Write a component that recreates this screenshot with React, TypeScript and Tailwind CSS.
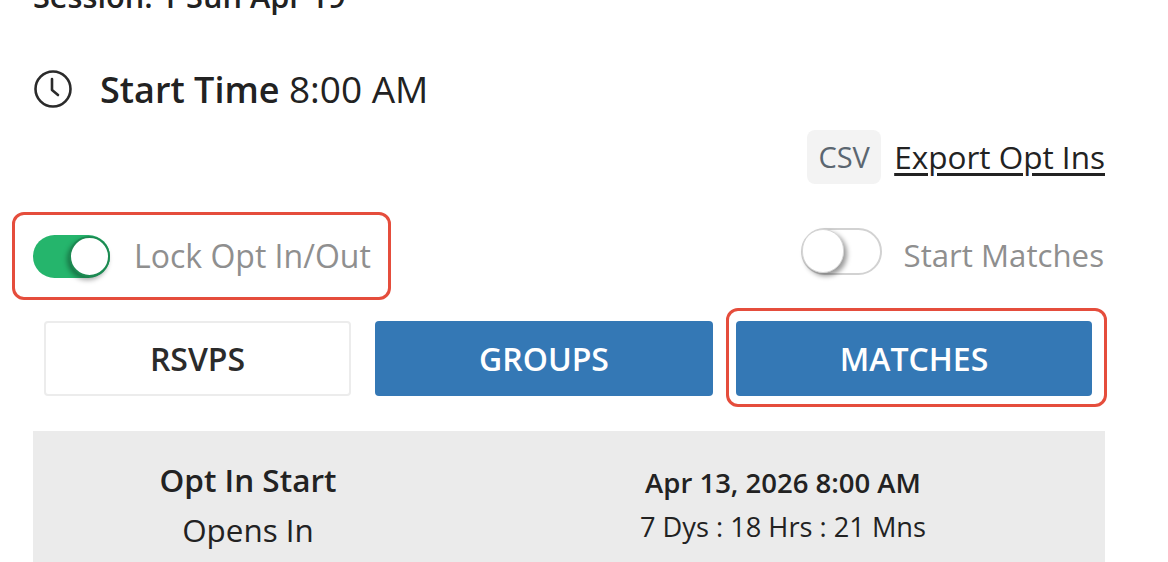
import React from 'react';

const font = { fontFamily: '"Open Sans", sans-serif' };

function Toggle({ on }: { on: boolean }) {
  if (on) {
    return (
      <div className="relative w-[77px] h-[43px] rounded-full bg-[#25b56c] shrink-0">
        <div className="absolute right-[0px] top-[1px] w-[41px] h-[41px] rounded-full bg-white border-2 border-[#1c8a52] shadow-[-2px_3px_5px_rgba(0,0,0,0.35)]" />
      </div>
    );
  }
  return (
    <div className="relative w-[81px] h-[47px] mb-[9px] rounded-full bg-white border-2 border-[#d2d2d2] shrink-0">
      <div className="absolute -left-[1px] -top-[1px] w-[42px] h-[44px] rounded-full bg-white border border-[#d5d5d5] shadow-[3px_3px_5px_rgba(0,0,0,0.4)]" />
    </div>
  );
}

export default function App() {
  return (
    <div className="w-[1168px] h-[562px] overflow-hidden bg-white text-[#222]" style={font}>
      <div className="pl-[33px] pr-[63px] -mt-[26px]">
        <div className="text-[30.7px] leading-[44px] font-semibold h-[44px] whitespace-nowrap">Session: 1 Sun Apr 19</div>

        <div className="flex items-center mt-[50px] h-[44px]">
          <svg className="w-[40px] h-[40px] shrink-0" viewBox="0 0 40 40" fill="none" stroke="#2b2b2b" strokeWidth="2.6" strokeLinecap="round" strokeLinejoin="round">
            <circle cx="20" cy="19" r="17.5" />
            <path d="M19 9v11l6 5" />
          </svg>
          <div className="ml-[27px] -mt-[2px] text-[36px] leading-[44px] whitespace-nowrap">
            <span className="font-semibold">Start Time</span> <span className="text-[37px]">8:00 AM</span>
          </div>
        </div>

        <div className="flex justify-end items-center mt-[18px] h-[54px]">
          <span className="flex items-center justify-center w-[74px] h-[54px] rounded-lg bg-[#f3f3f3] text-[#5b6670] text-[29px]">CSV</span>
          <a className="ml-[13px] text-[31.5px] underline underline-offset-4 whitespace-nowrap">Export Opt Ins</a>
        </div>

        <div className="flex items-center justify-between mt-[28px] h-[88px]">
          <div className="flex items-center gap-[24px] h-[88px] w-[379px] -ml-[21px] pl-[18px] border-[3px] border-[#e54d3c] rounded-xl shrink-0">
            <Toggle on />
            <span className="text-[32px] -mt-[1px] text-[#8f8f8f] whitespace-nowrap">Lock Opt In/Out</span>
          </div>
          <div className="flex items-center gap-[22px] pr-[1px]">
            <Toggle on={false} />
            <span className="text-[31.2px] -mt-[1px] text-[#8f8f8f] whitespace-nowrap">Start Matches</span>
          </div>
        </div>

        <div className="flex items-center mt-[8px] h-[99px] pl-[11px]">
          <button className="w-[307px] h-[75px] mt-[1px] pt-[2px] shrink-0 rounded bg-white border-2 border-[#ececec] text-[32px] font-semibold text-[#2b2b2b]">RSVPS</button>
          <button className="w-[338px] h-[75px] mt-[1px] pt-[2px] ml-[24px] shrink-0 rounded bg-[#3478b5] text-[32px] font-semibold text-white">GROUPS</button>
          <div className="flex items-center w-[381px] h-[99px] ml-[13px] pl-[7px] shrink-0 border-[3px] border-[#e54d3c] rounded-xl">
            <button className="w-[356px] h-[75px] mt-[1px] pt-[2px] rounded bg-[#3478b5] text-[32px] font-semibold text-white">MATCHES</button>
          </div>
        </div>

        <div className="mt-[24px] h-[200px] bg-[#ebebeb] flex text-[#222]">
          <div className="w-[430px] pt-[27px] text-center">
            <div className="text-[31.5px] leading-[44px] font-semibold">Opt In Start</div>
            <div className="text-[31.4px] leading-[50px] mt-[3px]">Opens In</div>
          </div>
          <div className="w-[640px] pt-[30px] text-center">
            <div className="text-[27.5px] leading-[44px] font-semibold">Apr 13, 2026 8:00 AM</div>
            <div className="text-[27.2px] leading-[44px]">7 Dys : 18 Hrs : 21 Mns</div>
          </div>
        </div>
      </div>
    </div>
  );
}
